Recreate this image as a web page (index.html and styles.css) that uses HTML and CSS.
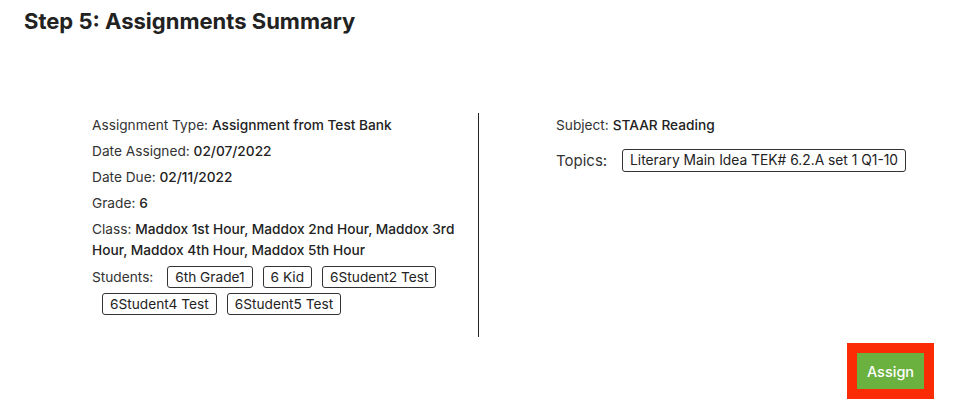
FILE: index.html
```html
<!DOCTYPE html>
<html>
<head>
<meta charset="utf-8">
<link rel="stylesheet" href="styles.css">
</head>
<body>
<div class="page">
  <h2 class="title">Step 5: Assignments Summary</h2>
  <div class="summary">
    <div class="col-left">
      <div class="item">Assignment Type: <b>Assignment from Test Bank</b></div>
      <div class="item">Date Assigned: <b>02/07/2022</b></div>
      <div class="item">Date Due: <b>02/11/2022</b></div>
      <div class="item">Grade: <b>6</b></div>
      <div class="item">Class: <b>Maddox 1st Hour, Maddox 2nd Hour, Maddox 3rd Hour, Maddox 4th Hour, Maddox 5th Hour</b></div>
      <div class="item students">Students: <span class="tag">6th Grade1</span><span class="tag">6 Kid</span><span class="tag">6Student2 Test</span><span class="tag">6Student4 Test</span><span class="tag">6Student5 Test</span></div>
    </div>
    <div class="divider"></div>
    <div class="col-right">
      <div class="item">Subject: <b>STAAR Reading</b></div>
      <div class="topics"><span class="topics-label">Topics:</span><span class="topic">Literary Main Idea TEK# 6.2.A set 1 Q1-10</span></div>
    </div>
  </div>
  <div class="actions">
    <span class="highlight"><button class="assign">Assign</button></span>
  </div>
</div>
</body>
</html>
```
FILE: styles.css
```css
html, body {
  margin: 0;
  padding: 0;
  background: #fff;
}
body {
  font-family: Inter, "Noto Sans", sans-serif;
  color: #222;
}
.page {
  padding: 7px 0 0 24px;
  width: 955px;
}
.title {
  margin: 0;
  font-size: 22px;
  font-weight: 700;
  line-height: 28px;
  color: #222;
}
.summary {
  display: flex;
  margin-top: 80px;
  margin-left: 68px;
}
.col-left {
  width: 376px;
  font-size: 13.7px;
  line-height: 21px;
  color: #333;
}
.item {
  margin-bottom: 5px;
}
.item b {
  font-weight: 500;
  color: #222;
}
.students {
  line-height: 27px;
  margin-top: -2px;
}
.tag {
  display: inline-block;
  line-height: 20px;
  padding: 0 7px;
  margin-left: 10px;
  border: 1px solid #333;
  border-radius: 3px;
  color: #222;
}
.divider {
  width: 1px;
  background: #222;
  height: 224px;
  margin-top: -2px;
  margin-left: 10px;
}
.col-right {
  padding-left: 77px;
  font-size: 13.7px;
  line-height: 21px;
  color: #333;
}
.topics {
  margin-top: 13px;
  display: flex;
  align-items: center;
}
.topics-label {
  font-size: 15px;
  width: 66px;
}
.topic {
  font-size: 13.8px;
  line-height: 21px;
  padding: 0 7px;
  border: 1px solid #333;
  border-radius: 3px;
  color: #222;
}
.actions {
  display: flex;
  justify-content: flex-end;
  padding-right: 45px;
  margin-top: 6px;
}
.highlight {
  display: inline-block;
  border: 10px solid #fb2b05;
}
.assign {
  display: block;
  width: 67px;
  height: 36px;
  border: 0;
  background: #6bb140;
  color: #fff;
  font-family: Inter, "Noto Sans", sans-serif;
  font-size: 14.5px;
  font-weight: 500;
  padding: 0;
}
```
